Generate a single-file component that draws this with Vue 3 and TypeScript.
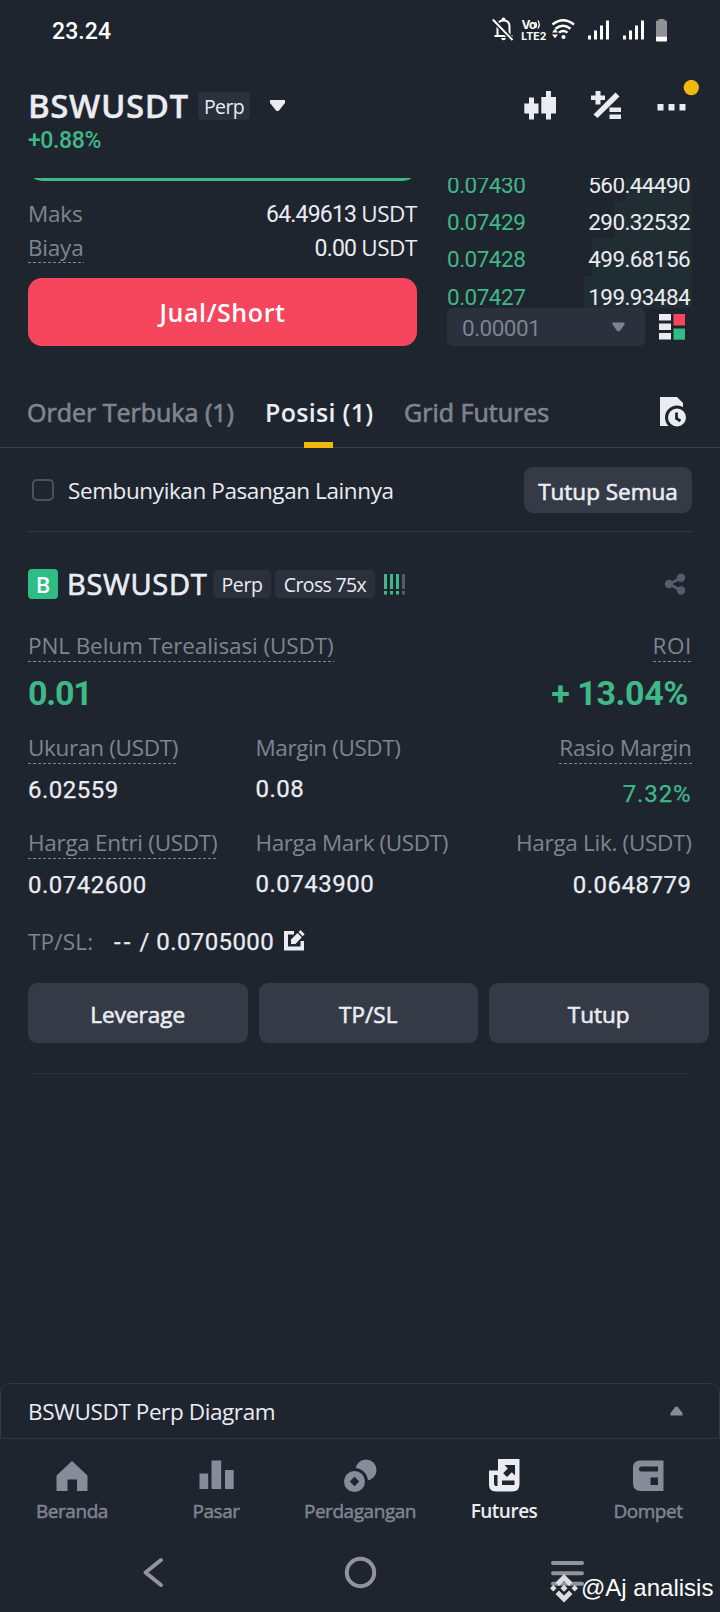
<script setup lang="ts">
interface BookRow { price: string; amount: string; depth: number }
interface Stat { label: string; value: string; hint: boolean; low: boolean; good: boolean }

const book: BookRow[] = [
  { price: '0.07430', amount: '560.44490', depth: 66 },
  { price: '0.07429', amount: '290.32532', depth: 78 },
  { price: '0.07428', amount: '499.68156', depth: 100 },
  { price: '0.07427', amount: '199.93484', depth: 108 },
]

const stats: Stat[] = [
  { label: 'Ukuran (USDT)', value: '6.02559', hint: true, low: false, good: false },
  { label: 'Margin (USDT)', value: '0.08', hint: false, low: false, good: false },
  { label: 'Rasio Margin', value: '7.32%', hint: true, low: true, good: true },
  { label: 'Harga Entri (USDT)', value: '0.0742600', hint: true, low: false, good: false },
  { label: 'Harga Mark (USDT)', value: '0.0743900', hint: false, low: false, good: false },
  { label: 'Harga Lik. (USDT)', value: '0.0648779', hint: false, low: false, good: false },
]

const actions: string[] = ['Leverage', 'TP/SL', 'Tutup']
</script>

<template>
  <div class="screen">
    <div class="status">
      <span class="clock">23.24</span>
      <svg class="status-icons" width="182" height="30" viewBox="0 0 182 30">
        <g fill="none" stroke="#fff" stroke-width="2">
          <path d="M5.5 20.500V11.500Q5.500 5.500 11.500 5.500T17.500 11.500V20.500M2.500 21H20.500" />
          <path d="M.8 4.500 20.500 25" stroke="#1f252f" stroke-width="5" />
          <path d="M.8 4.500 20.500 25" />
        </g>
        <path d="M9.500 5.500V4.500a2 2 0 0 1 4 0v1zM9 23h5q-.5 2.300-2.500 2.300T9 23z" fill="#fff" />
        <text x="29.500" y="14" class="vo">Vo</text>
        <path d="M43.500 7q2 3 0 6M46 5.500q2.500 4 0 8" fill="none" stroke="#fff" stroke-width="1.300" />
        <text x="29.300" y="24.500" class="lte">LTE2</text>
        <g fill="none" stroke="#fff" stroke-width="2.400">
          <path d="M60.500 9.500q10.500-8.500 21.500 0M63.500 13.700q7.500-6 15 0M67 17.600q4.300-3.200 8.500 0" />
        </g>
        <circle cx="71.500" cy="22" r="2" fill="#fff" />
        <path d="M60 17.500l3-3.800 3 3.800zM60 19.500l3 3.800 3-3.800z" fill="#fff" />
        <path d="M96 20.500h3v4h-3zM102 15.500h3v9h-3zM108 10.500h3v14h-3zM114 5.500h3v19h-3zM131 20.500h3v4h-3zM137 15.500h3v9h-3zM143 10.500h3v14h-3zM149 5.500h3v19h-3z" fill="#fff" />
        <path d="M164 6.500q0-1 1-1h1.500v-1.500h6v1.500h1.500q1 0 1 1v15h-11z" fill="#8f9196" />
        <path d="M164 21.500h11v4q0 1-1 1h-9q-1 0-1-1z" fill="#fff" />
      </svg>
    </div>

    <header class="header">
      <div class="pair">
        <div class="pair-row">
          <h1>BSWUSDT</h1>
          <span class="tag tag-top">Perp</span>
          <svg class="pair-caret" width="17" height="13" viewBox="0 0 17 13"><path d="M1 1h15v3L10 11.500q-1.500 1-3 0L1 4z" fill="#ebecf1" /></svg>
        </div>
        <div class="change">+0.88%</div>
      </div>
      <svg class="tools" width="180" height="44" viewBox="0 0 180 44">
        <g fill="#ebecf1">
          <path d="M5 17.500h5v6h4.500v10H10v6H5v-6H.3v-10H5zM22 11h5v6h5v16.500h-5v6h-5v-6h-4.700V17H22z" />
          <path d="M71.500 11h5v4.500H81v4.500h-4.500v4.500h-5V20H67v-4.500h4.500zM85.500 27.500h11.500v4.500H85.500zM85.500 34.500h11.500V39H85.500z" />
          <path d="M69.500 34.500 91.500 12.500l4 4L73.500 38z" />
          <path d="M133.500 24h6v6.500h-6zM144.500 24h6v6.500h-6zM155.500 24h6v6.500h-6z" />
        </g>
        <circle cx="167.300" cy="7.600" r="7.700" fill="#f0b90b" />
      </svg>
    </header>

    <section class="trade">
      <div class="order">
        <div class="buy"></div>
        <div class="line max"><span class="label">Maks</span><span class="amount">64.49613 <i>USDT</i></span></div>
        <div class="line cost"><span class="label hint">Biaya</span><span class="amount">0.00 <i>USDT</i></span></div>
        <button class="sell">Jual/Short</button>
      </div>
      <div class="side">
        <div class="book">
          <div v-for="row in book" :key="row.price" class="book-row">
            <span class="depth" :style="{ width: row.depth + 'px' }"></span>
            <span class="price">{{ row.price }}</span>
            <span class="qty">{{ row.amount }}</span>
          </div>
        </div>
        <div class="precision-row">
          <div class="precision">
            <span>0.00001</span>
            <svg width="13" height="10" viewBox="0 0 13 10"><path d="M.5.5h12v2L8 8.700q-1.500 1.300-3 0L.5 2.500z" fill="#7d8390" /></svg>
          </div>
          <svg width="26" height="26" viewBox="0 0 26 26">
            <path d="M0 0h12v6.500H0zM0 9.500h12V16H0zM0 19h12v6.500H0z" fill="#ebecf1" />
            <path d="M14.500 0H26v11.500H14.500z" fill="#f6465d" /><path d="M14.500 14.500H26v11.200H14.500z" fill="#2ebd85" />
          </svg>
        </div>
      </div>
    </section>

    <nav class="tabs">
      <span class="tab t1">Order Terbuka (1)</span>
      <span class="tab t2 active">Posisi (1)</span>
      <span class="tab t3">Grid Futures</span>
      <svg class="history" width="28" height="30" viewBox="0 0 28 30">
        <path d="M0 0h17l6 6v23H0z" fill="#ebecf1" />
        <circle cx="17" cy="20.500" r="12" fill="#1f252f" />
        <circle cx="17" cy="20.500" r="9" fill="#ebecf1" />
        <path d="M16.500 15.500v6l4 2.500" fill="none" stroke="#1f252f" stroke-width="2.800" />
      </svg>
    </nav>

    <div class="filter">
      <span class="check"></span>
      <span class="filter-text">Sembunyikan Pasangan Lainnya</span>
      <button class="close-all">Tutup Semua</button>
    </div>

    <article class="position">
      <div class="pos-head">
        <span class="badge">B</span>
        <h2>BSWUSDT</h2>
        <span class="tag tag-perp">Perp</span>
        <span class="tag tag-cross">Cross 75x</span>
        <svg class="risk" width="22" height="21" viewBox="0 0 22 21">
          <path d="M0 0h3v15H0zM0 17h3v3.500H0zM6 0h3v15H6zM6 17h3v3.500H6zM12 0h3v15h-3zM12 17h3v3.500h-3z" fill="#3fb887" />
          <path d="M18 0h3v15h-3zM18 17h3v3.500h-3z" fill="#565b67" />
        </svg>
        <svg class="share" width="22" height="22" viewBox="0 0 22 22">
          <path d="M17 5 5 11l12 6.500" fill="none" stroke="#565c69" stroke-width="2.600" />
          <circle cx="5" cy="11" r="4.200" fill="#565c69" /><circle cx="17" cy="4.700" r="4.200" fill="#565c69" /><circle cx="17" cy="17.500" r="4.200" fill="#565c69" />
        </svg>
      </div>

      <div class="pnl">
        <div><span class="label hint pnl-label">PNL Belum Terealisasi (USDT)</span><div class="big">0.01</div></div>
        <div class="right"><span class="label hint roi-label">ROI</span><div class="big roi">+ 13.04%</div></div>
      </div>

      <div class="stats">
        <div v-for="s in stats" :key="s.label" class="stat">
          <span class="label" :class="{ hint: s.hint }">{{ s.label }}</span>
          <div class="value" :class="{ good: s.good, low: s.low, raised: !s.hint && s.label !== 'Harga Lik. (USDT)' }">{{ s.value }}</div>
        </div>
      </div>

      <div class="tpsl">
        <span class="label">TP/SL:</span>
        <span class="tpsl-value"><span class="dash">--</span> / 0.0705000</span>
        <svg width="21" height="21" viewBox="0 0 21 21">
          <path d="M0 1h10v3.500H4V16.500h12.500V11H20v9.500H0z" fill="#ebecf1" />
          <path d="M7 14v-4.500l6.500-6.500 4.300 4.300L11.500 14zM14.500 2 16.500 0l4.200 4.200-2 2z" fill="#ebecf1" />
        </svg>
      </div>

      <div class="actions"><button v-for="a in actions" :key="a">{{ a }}</button></div>
    </article>

    <div class="diagram">
      <span>BSWUSDT Perp Diagram</span>
      <svg width="13" height="10" viewBox="0 0 13 10"><path d="M.5 9.500v-2.500L5 1.300q1.500-1.500 3 0L12.500 7v2.500z" fill="#868c99" /></svg>
    </div>

    <nav class="bottom">
      <a>
        <svg width="36" height="34" viewBox="0 0 36 34"><path d="M18 2 33.500 16.500V32H23V20.500h-9.500V32H2.500V16.500z" /></svg>
        <span>Beranda</span>
      </a>
      <a>
        <svg width="36" height="34" viewBox="0 0 36 34"><path d="M1.500 14.500h8.700V30H1.500zM13.500 1.500h9.700V30h-9.700zM27 11h8.700v19H27z" /></svg>
        <span>Pasar</span>
      </a>
      <a>
        <svg width="36" height="34" viewBox="0 0 36 34"><circle cx="24" cy="11" r="10.500" /><circle cx="12.500" cy="22.500" r="13.500" fill="#1f252f" /><circle cx="12.500" cy="22.500" r="10.500" /><path d="M12.500 17.800 17.200 22.500 12.500 27.200 7.800 22.500z" fill="#1f252f" /></svg>
        <span>Perdagangan</span>
      </a>
      <a class="on">
        <svg width="36" height="34" viewBox="0 0 36 34"><path d="M12 0h21.500v25q0 7.500-7 7.500H10q-7 0-7-7V11.500h9z" /><path d="M8 16h3.500v11H10q-2 0-2-3zM16 21.500h12.500V26H16zM18.500 6h10.500v10.500l-3.200-3.200-4.800 4.800-3.800-3.800 4.600-4.800z" fill="#1f252f" /></svg>
        <span>Futures</span>
      </a>
      <a>
        <svg width="36" height="34" viewBox="0 0 36 34"><path d="M10 1.500h23.500V32H11q-8 0-8-8V9q0-7.500 7-7.500z" /><path d="M11.500 7.500H28v5H11.500a2.500 2.500 0 0 1 0-5zM20.500 18.500H28V26h-7.500z" fill="#1f252f" /></svg>
        <span>Dompet</span>
      </a>
    </nav>

    <div class="system">
      <svg width="720" height="92" viewBox="0 0 720 92" fill="none" stroke="#92949a" stroke-width="4" stroke-linecap="round">
        <path d="M161 40 145.500 52.500 161 65" stroke-linejoin="round" />
        <circle cx="360.500" cy="52.500" r="13.700" />
        <path d="M553 43h29M553 53.300h29M553 63.800h29" />
      </svg>
      <div class="credit">
        <svg width="28" height="29" viewBox="0 0 28 29" fill="#dddde0">
          <path d="M14 0 22.500 8.500 19 12l-5-5-5 5-3.500-3.500zM14 28.500 5.500 20 9 16.500l5 5 5-5 3.500 3.500zM14 10.700l3.500 3.500-3.500 3.500-3.500-3.500zM3.300 11l3.300 3.200-3.300 3.300L0 14.200zM24.700 11l3.300 3.200-3.300 3.300-3.300-3.300z" />
        </svg>
        <span>@Aj analisis</span>
      </div>
    </div>
  </div>
</template>

<style>
body { background: #1f252f; }
</style>

<style scoped>
.screen { width: 720px; height: 1612px; display: flex; flex-direction: column; overflow: hidden; background: #1f252f; color: #ebecf1; font-family: "Open Sans", "Noto Sans", sans-serif; font-size: 22.500px; white-space: nowrap; box-sizing: border-box; }
.screen * { box-sizing: border-box; }
svg { display: block; flex: none; }
button { border: 0; padding: 0; margin: 0; font: inherit; color: inherit; text-align: center; -webkit-text-stroke: .6px currentColor; }
h1, h2 { margin: 0; }
i { font-style: normal; }

.status { height: 80px; padding: 15px 0 0 52px; display: flex; align-items: flex-start; flex: none; }
.clock { width: 440px; font: 500 23px/34px Roboto, sans-serif; color: #fff; letter-spacing: .1px; }
.status-icons text { fill: #fff; font-family: Inter, sans-serif; font-weight: 700; }
.vo { font-size: 12px; letter-spacing: -.8px; }
.lte { font-size: 10.500px; }

.header { height: 98px; flex: none; display: flex; padding: 6px 0 0 28px; }
.pair { width: 497px; }
.pair-row { display: flex; height: 40px; align-items: center; }
h1 { width: 170px; font-size: 33px; font-weight: 600; line-height: 40px; letter-spacing: .6px; -webkit-text-stroke: .3px currentColor; }
.pair-caret { margin-left: 19px; margin-top: -1px; }
.tag { display: block; background: #2a303c; border-radius: 4px; text-align: center; font: 400 19.500px/30px "Open Sans", sans-serif; height: 28px; }
.tag-top { width: 52px; letter-spacing: -.6px; }
.change { font: 500 23px/30px Roboto, sans-serif; color: #3fb887; letter-spacing: -.4px; }
.tools { margin-top: -6px; margin-left: -1px; }

.trade { height: 203px; flex: none; display: flex; overflow: hidden; padding-left: 28px; }
.order { width: 419px; }
.buy { width: 389px; height: 68px; margin-top: -65px; border-radius: 14px; background: #3fb887; }
.line { width: 389px; display: flex; justify-content: space-between; line-height: 34px; height: 33px; }
.max { margin-top: 16px; }
.cost { margin-top: 1px; }
.amount { font-family: Roboto, sans-serif; font-size: 23px; letter-spacing: -.8px; }
.amount i { font-family: "Open Sans", sans-serif; font-size: 22.500px; letter-spacing: -.4px; }
.label { color: #7f8490; display: inline-block; line-height: 32px; height: 32px; letter-spacing: -.3px; }
.line .label { line-height: 33px; letter-spacing: -.2px; }
.hint { background: repeating-linear-gradient(90deg, #7f8490 0 3px, transparent 3px 5px) left bottom / 100% 1px no-repeat; }
.sell { display: block; width: 389px; height: 68px; margin-top: 14px; border-radius: 14px; background: #f6465d; font-size: 25px; font-weight: 600; letter-spacing: .6px; color: #fff; -webkit-text-stroke: 0; }
.side { width: 245px; }
.book { height: 130px; overflow: hidden; }
.book-row { position: relative; height: 37.400px; display: flex; justify-content: space-between; align-items: flex-start; padding-right: 2px; font: 400 22.500px/42px Roboto, sans-serif; }
.book-row:first-child { margin-top: -14.500px; }
.depth { position: absolute; right: 0; top: 0; height: 100%; background: #202e34; }
.price { position: relative; color: #3fb887; letter-spacing: -.5px; }
.qty { position: relative; letter-spacing: -.6px; }
.precision-row { display: flex; align-items: center; gap: 14px; }
.precision { width: 198px; height: 38px; border-radius: 6px; background: #2a303c; display: flex; align-items: center; justify-content: space-between; padding: 0 20px 0 15px; color: #7d8390; font: 400 22.500px/38px Roboto, sans-serif; letter-spacing: -.5px; }
.precision span { padding-top: 2px; }

.tabs { height: 67px; flex: none; display: flex; border-bottom: 1px solid #3a404a; padding: 0 0 0 27px; }
.tab { position: relative; font-size: 25px; line-height: 62px; font-weight: 400; color: #7f8490; -webkit-text-stroke: .7px currentColor; }
.t1 { width: 238px; }
.t2 { width: 139px; }
.t3 { width: 256px; }
.active { color: #ebecf1; font-weight: 600; letter-spacing: .3px; -webkit-text-stroke: 0; }
.active::after { content: ""; position: absolute; left: 39px; bottom: -1px; width: 29px; height: 6px; background: #f0b90b; }
.history { margin-top: 16px; }

.filter { margin: 0 28px; height: 84px; flex: none; border-bottom: 1px solid #333944; display: flex; align-items: center; }
.check { width: 22px; height: 22px; margin-left: 4px; border: 2px solid #4b515d; border-radius: 5px; }
.filter-text { width: 456px; margin-left: 14px; padding-top: 2px; letter-spacing: -.4px; }
.close-all { width: 168px; height: 46px; padding-top: 3px; border-radius: 9px; background: #343a46; }

.position { margin-left: 28px; width: 692px; height: 851px; flex: none; }
.pos-head { display: flex; align-items: center; height: 30px; margin-top: 37px; }
.badge { width: 30px; height: 30px; border-radius: 4px; background: #2ebd85; color: #fff; font-weight: 600; font-size: 22px; line-height: 31px; text-align: center; }
h2 { width: 146px; margin-left: 9px; font-size: 29px; font-weight: 400; line-height: 32px; letter-spacing: .7px; -webkit-text-stroke: .7px currentColor; }
.tag-perp { width: 58px; letter-spacing: -.4px; }
.tag-cross { width: 100px; margin-left: 4px; letter-spacing: -.65px; }
.risk { margin-left: 9px; }
.share { margin-left: 258px; }
.pnl { display: flex; justify-content: space-between; width: 664px; margin-top: 31px; height: 102px; }
.pnl-label { letter-spacing: -.1px; }
.roi-label { letter-spacing: .6px; }
.right { text-align: right; }
.big { font: 700 34px/46px Roboto, sans-serif; color: #3fb887; margin-top: 8px; letter-spacing: -1.200px; }
.roi { padding-right: 4px; letter-spacing: -.4px; }
.stats { display: grid; grid-template-columns: 227.500px 228px 208px; grid-auto-rows: 95px; }
.stat:nth-child(3n) { text-align: right; }
.stat:nth-child(3n+2) .label { letter-spacing: -.4px; }
.value { font: 400 24px/34px Roboto, sans-serif; margin-top: 9px; letter-spacing: .5px; -webkit-text-stroke: .25px currentColor; }
.raised { margin-top: 8px; }
.low { margin-top: 13px; letter-spacing: .9px; }
.good { color: #3fb887; }
.tpsl { display: flex; align-items: center; height: 34px; margin-top: 3px; }
.tpsl .label { width: 86px; letter-spacing: .2px; }
.tpsl-value { width: 170px; font: 400 24px/35px Roboto, sans-serif; letter-spacing: .4px; -webkit-text-stroke: .25px currentColor; }
.tpsl svg { margin-top: -3px; }
.dash { letter-spacing: 3px; }
.actions { display: flex; gap: 11px; margin-top: 24px; padding-bottom: 30px; width: 664px; border-bottom: 1px solid #292f39; }
.actions button { flex: none; width: 219.500px; height: 60px; padding-top: 3px; border-radius: 9px; background: #343a46; }

.diagram { height: 56px; flex: none; border: 1px solid #333944; border-radius: 10px 10px 0 0; display: flex; justify-content: space-between; align-items: center; padding: 0 36px 0 27px; letter-spacing: -.4px; }
.bottom { height: 81px; flex: none; display: flex; padding-top: 20px; }
.bottom a { width: 144px; display: flex; flex-direction: column; align-items: center; font-size: 19px; line-height: 26px; letter-spacing: -.45px; color: #7f8490; -webkit-text-stroke: .5px currentColor; }
.bottom svg { fill: #858c9a; }
.bottom span { margin-top: 5px; }
.bottom .on { color: #ebecf1; font-weight: 600; letter-spacing: -.5px; -webkit-text-stroke: 0; }
.bottom .on svg { fill: #ebecf1; }
.system { position: relative; height: 92px; flex: none; }
.credit { position: absolute; left: 550px; top: 53px; display: flex; align-items: center; gap: 3px; font: 400 24px/30px "Liberation Sans", Arial, sans-serif; color: #fff; }
</style>
